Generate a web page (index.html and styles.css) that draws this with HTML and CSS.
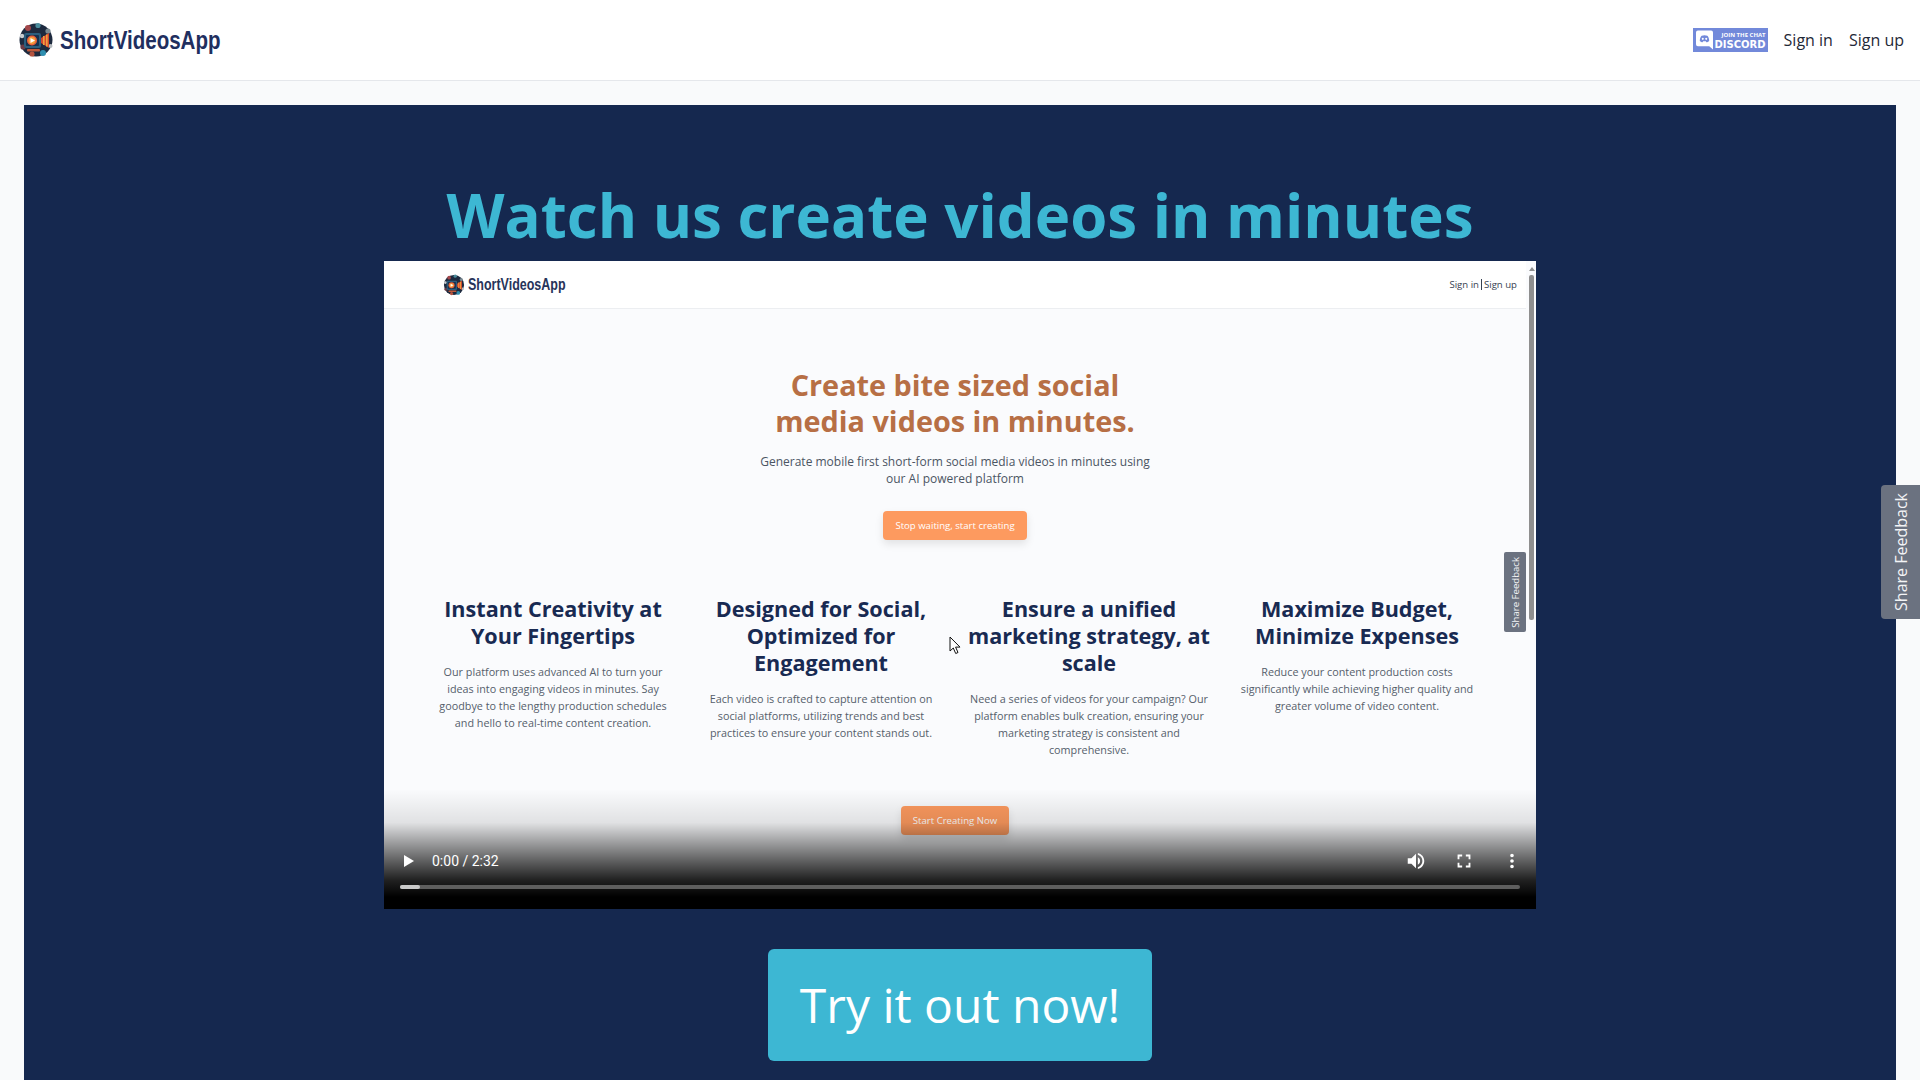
FILE: index.html
```html
<!DOCTYPE html>
<html lang="en">
<head>
    <meta charset="UTF-8">
    <meta name="viewport" content="width=device-width, initial-scale=1.0">
    <title>ShortVideosApp</title>
    <link rel="stylesheet" href="styles.css">
</head>
<body>
    <svg class="defs" width="0" height="0" aria-hidden="true">
        <symbol id="logo" viewBox="0 0 36 36">
            <circle cx="18" cy="18" r="16.500" fill="#1d2a3f"/>
            <circle cx="10" cy="6" r="3" fill="#a3474a"/>
            <circle cx="20" cy="3.500" r="2.600" fill="#4b8c9c"/>
            <circle cx="30" cy="9" r="2.600" fill="#7a8a92"/>
            <circle cx="4" cy="14" r="2.200" fill="#c8ccd0"/>
            <circle cx="5" cy="25" r="2.600" fill="#6d3a44"/>
            <circle cx="14" cy="32" r="2.600" fill="#b5533f"/>
            <circle cx="25" cy="31" r="3" fill="#2f8fb0"/>
            <circle cx="32.500" cy="24" r="2" fill="#b7bcc0"/>
            <rect x="6" y="11" width="17" height="15" rx="2" fill="#2b5d7d"/>
            <rect x="8" y="13" width="13" height="11" rx="1" fill="#17304d"/>
            <circle cx="14" cy="18.500" r="5" fill="#e8603a"/>
            <circle cx="14" cy="18.500" r="3.400" fill="#f4a03c"/>
            <polygon points="12.500,16 12.500,21 17,18.500" fill="#fff"/>
            <polygon points="23,16 31,11 31,26 23,21" fill="#d4472f"/>
            <rect x="25" y="14" width="1.600" height="9" fill="#f0a040"/>
            <rect x="28" y="12.500" width="1.600" height="12" fill="#f0a040"/>
            <rect x="9" y="27" width="13" height="2.500" rx="1" fill="#c05a3c"/>
        </symbol>
    </svg>

    <nav class="topbar">
        <a class="brand">
            <svg class="brand-logo"><use href="#logo"/></svg>
            <span class="brand-name">ShortVideosApp</span>
        </a>
        <div class="topbar-links">
            <a class="discord-badge">
                <svg class="discord-icon" viewBox="0 0 18 20">
                    <path d="M2 0h14a2 2 0 0 1 2 2v18l-4-3.400H2a2 2 0 0 1-2-2V2a2 2 0 0 1 2-2z" fill="#fff"/>
                    <path d="M4 11c0-2.500 1-5 2-5.600 2-.7 4-.7 6 0 1 .6 2 3.100 2 5.600-1 1-2 1.300-3 1.400l-.6-1H7.600l-.6 1c-1-.1-2-.4-3-1.400z" fill="#7289da"/>
                    <circle cx="7.200" cy="8.800" r="1.100" fill="#fff"/>
                    <circle cx="10.800" cy="8.800" r="1.100" fill="#fff"/>
                </svg>
                <span class="discord-text">
                    <span class="discord-join">JOIN THE CHAT</span>
                    <span class="discord-name">DISCORD</span>
                </span>
            </a>
            <a class="nav-link">Sign in</a>
            <a class="nav-link">Sign up</a>
        </div>
    </nav>

    <main class="page">
        <section class="panel">
            <h1 class="panel-title">Watch us create videos in minutes</h1>

            <div class="video">
                <div class="shot">
                    <div class="shot-nav">
                        <div class="shot-brand">
                            <svg class="shot-logo"><use href="#logo"/></svg>
                            <span class="shot-name">ShortVideosApp</span>
                        </div>
                        <div class="shot-links">Sign in<span class="shot-sep"></span>Sign up</div>
                    </div>

                    <div class="shot-hero">
                        <h2 class="shot-title">Create bite sized social<br>media videos in minutes.</h2>
                        <p class="shot-sub">Generate mobile first short-form social media videos in minutes using<br>our AI powered platform</p>
                        <span class="shot-btn">Stop waiting, start creating</span>
                    </div>

                    <div class="features">
                        <div class="feature">
                            <h3>Instant Creativity at Your Fingertips</h3>
                            <p>Our platform uses advanced AI to turn your ideas into engaging videos in minutes. Say goodbye to the lengthy production schedules and hello to real-time content creation.</p>
                        </div>
                        <div class="feature">
                            <h3>Designed for Social, Optimized for Engagement</h3>
                            <p>Each video is crafted to capture attention on social platforms, utilizing trends and best practices to ensure your content stands out.</p>
                        </div>
                        <div class="feature">
                            <h3>Ensure a unified marketing strategy, at scale</h3>
                            <p>Need a series of videos for your campaign? Our platform enables bulk creation, ensuring your marketing strategy is consistent and comprehensive.</p>
                        </div>
                        <div class="feature">
                            <h3>Maximize Budget, Minimize Expenses</h3>
                            <p>Reduce your content production costs significantly while achieving higher quality and greater volume of video content.</p>
                        </div>
                    </div>

                    <div class="shot-cta">
                        <span class="shot-btn">Start Creating Now</span>
                    </div>
                </div>

                <div class="shot-scroll">
                    <span class="shot-scroll-arrow"></span>
                    <span class="shot-scroll-thumb"></span>
                </div>
                <div class="shot-feedback"><span>Share Feedback</span></div>

                <svg class="shot-cursor" viewBox="0 0 12 19">
                    <path d="M1 1v14l3.300-3 2.400 5.500 2.300-1-2.400-5.400H11z" fill="#fff" stroke="#111" stroke-width="1"/>
                </svg>

                <div class="controls">
                    <div class="controls-row">
                        <svg class="ctl-play" viewBox="0 0 10 12"><polygon points="0,0 10,6 0,12" fill="#fff"/></svg>
                        <span class="ctl-time">0:00 / 2:32</span>
                        <svg class="ctl-icon ctl-volume" viewBox="0 0 24 24"><path fill="#fff" d="M3 9v6h4l5 5V4L7 9H3zm13.500 3c0-1.770-1.020-3.290-2.500-4.030v8.050c1.480-.73 2.500-2.250 2.500-4.020zM14 3.230v2.060c2.890.86 5 3.540 5 6.710s-2.110 5.850-5 6.710v2.060c4.010-.91 7-4.490 7-8.770s-2.990-7.860-7-8.770z"/></svg>
                        <svg class="ctl-icon ctl-full" viewBox="0 0 24 24"><path fill="#fff" d="M7 14H5v5h5v-2H7v-3zm-2-4h2V7h3V5H5v5zm12 7h-3v2h5v-5h-2v3zM14 5v2h3v3h2V5h-5z"/></svg>
                        <svg class="ctl-icon ctl-more" viewBox="0 0 24 24"><path fill="#fff" d="M12 8a2 2 0 1 0 0-4 2 2 0 0 0 0 4zm0 2a2 2 0 1 0 0 4 2 2 0 0 0 0-4zm0 6a2 2 0 1 0 0 4 2 2 0 0 0 0-4z"/></svg>
                    </div>
                    <div class="ctl-track"><span class="ctl-played"></span></div>
                </div>
            </div>

            <a class="try-btn">Try it out now!</a>
        </section>
    </main>

    <div class="feedback-tab"><span>Share Feedback</span></div>
</body>
</html>
```

FILE: styles.css
```css
* {
    box-sizing: border-box;
}
html, body {
    margin: 0;
    height: 100%;
    overflow: hidden;
}
body {
    font-family: "Open Sans", "Liberation Sans", sans-serif;
    background-color: #f9fafb;
    color: #1f2937;
}
.defs {
    position: absolute;
}

/* top bar */
.topbar {
    height: 81px;
    display: flex;
    align-items: center;
    justify-content: space-between;
    padding: 0 16px 0 18px;
    background: white;
    border-bottom: 1px solid #e5e7eb;
}
.brand {
    display: flex;
    align-items: center;
    gap: 6px;
}
.brand-logo {
    width: 36px;
    height: 36px;
}
.brand-name {
    display: inline-block;
    font-family: "Liberation Sans", sans-serif;
    font-weight: bold;
    font-size: 26px;
    color: #1f2f5f;
    transform: scaleX(0.79);
    transform-origin: left center;
}
.topbar-links {
    display: flex;
    align-items: center;
    gap: 16px;
}
.nav-link {
    font-size: 16px;
    line-height: 24px;
}
.discord-badge {
    width: 75px;
    height: 24px;
    display: flex;
    align-items: center;
    gap: 3px;
    padding-left: 3px;
    background-color: #7289da;
    color: white;
}
.discord-icon {
    width: 17px;
    height: 20px;
}
.discord-text {
    display: flex;
    flex-direction: column;
    align-items: flex-end;
    width: 50px;
    font-family: "DejaVu Sans", sans-serif;
    font-weight: bold;
    line-height: 1;
}
.discord-join {
    font-size: 6px;
    font-family: "Open Sans", sans-serif;
    line-height: 9px;
    white-space: nowrap;
}
.discord-name {
    font-size: 10px;
    line-height: 10px;
}

/* main panel */
.page {
    padding: 24px 24px 0;
}
.panel {
    height: 1000px;
    padding-top: 80px;
    display: flex;
    flex-direction: column;
    align-items: center;
    background-color: #15284f;
}
.panel-title {
    margin: 0 0 16px;
    font-size: 60px;
    line-height: 60px;
    font-weight: 700;
    color: #3db7d3;
}
.try-btn {
    margin-top: 40px;
    width: 384px;
    height: 112px;
    padding-bottom: 2px;
    display: flex;
    align-items: center;
    justify-content: center;
    border-radius: 6px;
    background-color: #3db7d3;
    color: white;
    font-size: 48px;
}

/* video frame with the recorded page inside */
.video {
    position: relative;
    width: 1152px;
    height: 648px;
    overflow: hidden;
    background-color: #fafbfd;
}
.shot {
    width: 1142px;
}
.shot-nav {
    height: 48px;
    display: flex;
    align-items: center;
    justify-content: space-between;
    padding: 0 9px 0 59px;
    background: white;
    border-bottom: 1px solid #eceef1;
}
.shot-brand {
    display: flex;
    align-items: center;
    gap: 3px;
}
.shot-logo {
    width: 22px;
    height: 22px;
}
.shot-name {
    display: inline-block;
    font-family: "Liberation Sans", sans-serif;
    font-weight: bold;
    font-size: 16px;
    color: #27345a;
    transform: scaleX(0.78);
    transform-origin: left center;
}
.shot-links {
    display: flex;
    align-items: center;
    font-size: 9.6px;
    color: #374151;
}
.shot-sep {
    width: 1px;
    height: 11px;
    margin: 0 2px;
    background-color: #374151;
}
.shot-hero {
    padding-top: 58px;
    text-align: center;
}
.shot-title {
    margin: 0 0 14px;
    font-size: 28.8px;
    line-height: 36px;
    font-weight: 700;
    color: #b76f45;
}
.shot-sub {
    margin: 0 0 24px;
    font-size: 12px;
    line-height: 17px;
    color: #4b5563;
}
.shot-btn {
    display: inline-block;
    padding: 0 12px;
    height: 29px;
    line-height: 29px;
    font-size: 9.6px;
    color: white;
    background-color: #fd9a5f;
    border-radius: 4px;
    box-shadow: 0 4px 8px rgba(0,0,0,0.1);
}
.features {
    width: 1048px;
    margin: 55px auto 0;
    display: grid;
    grid-template-columns: repeat(4, 244px);
    gap: 24px;
    text-align: center;
}
.feature h3 {
    margin: 0 0 14px;
    font-size: 21.6px;
    line-height: 27px;
    font-weight: 700;
    color: #182a52;
}
.feature p {
    margin: 0;
    padding: 0 2px;
    font-size: 10.8px;
    line-height: 17px;
    color: #555e6b;
}
.shot-cta {
    margin-top: 48px;
    text-align: center;
}
.shot-scroll {
    position: absolute;
    top: 0;
    right: 0;
    width: 10px;
    height: 100%;
}
.shot-scroll-arrow {
    position: absolute;
    top: 6px;
    left: 3px;
    border: 3px solid transparent;
    border-top: 0;
    border-bottom: 4px solid #8f8f8f;
}
.shot-scroll-thumb {
    position: absolute;
    top: 14px;
    left: 3px;
    width: 5px;
    height: 345px;
    border-radius: 2px;
    background-color: #8f8f8f;
}
.shot-feedback {
    position: absolute;
    top: 291px;
    right: 10px;
    width: 22px;
    height: 80px;
    display: flex;
    align-items: center;
    justify-content: center;
    border-radius: 2px;
    background-color: #6b7280;
    color: #f3f4f6;
    font-size: 9.6px;
}
.shot-feedback span,
.feedback-tab span {
    writing-mode: vertical-rl;
    transform: rotate(180deg);
    white-space: nowrap;
}
.shot-cursor {
    position: absolute;
    left: 565px;
    top: 375px;
    width: 12px;
    height: 19px;
}

/* player controls */
.controls {
    position: absolute;
    left: 0;
    right: 0;
    bottom: 0;
    height: 120px;
    padding: 0 16px;
    background: linear-gradient(to bottom, rgba(0,0,0,0) 0%, rgba(0,0,0,0.1) 28%, rgba(0,0,0,0.33) 42%, rgba(0,0,0,0.62) 60%, rgba(0,0,0,0.87) 76%, rgba(0,0,0,1) 90%);
}
.controls-row {
    height: 24px;
    margin-top: 60px;
    display: flex;
    align-items: center;
    padding-left: 4px;
    color: white;
}
.ctl-play {
    width: 10px;
    height: 12px;
}
.ctl-time {
    margin-left: 18px;
    font-family: Roboto, "Liberation Sans", sans-serif;
    font-size: 14px;
}
.ctl-icon {
    width: 22px;
    height: 22px;
}
.ctl-volume {
    margin-left: auto;
}
.ctl-full {
    margin-left: 26px;
}
.ctl-more {
    margin-left: 26px;
    margin-right: -3px;
}
.ctl-track {
    height: 4px;
    margin-top: 12px;
    border-radius: 2px;
    background-color: #5e5e5e;
}
.ctl-played {
    display: block;
    width: 20px;
    height: 100%;
    border-radius: 2px;
    background-color: #c9c9c9;
}

/* feedback tab on the window edge */
.feedback-tab {
    position: fixed;
    top: 485px;
    right: 0;
    width: 39px;
    height: 134px;
    display: flex;
    align-items: center;
    justify-content: center;
    border-radius: 4px 0 0 4px;
    background-color: #6b7280;
    color: #f3f4f6;
    font-size: 16px;
}
```
